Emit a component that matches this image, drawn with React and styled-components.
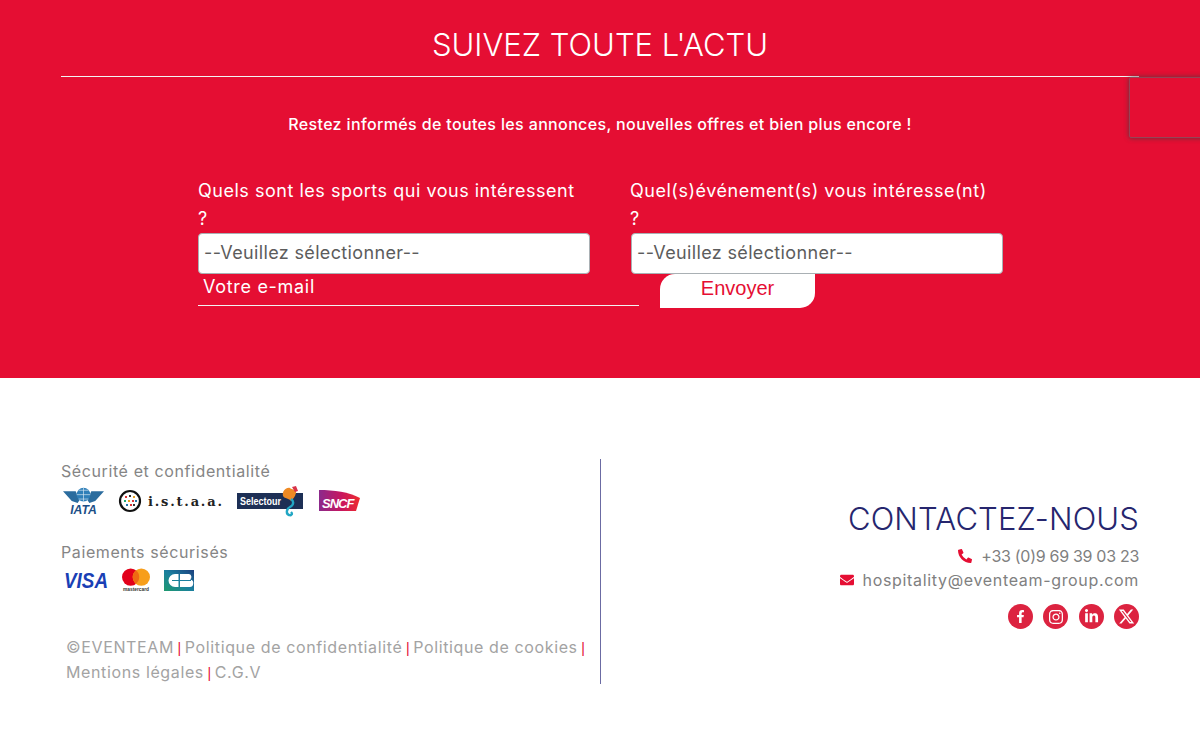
import React from 'react'
import styled, { createGlobalStyle } from 'styled-components'
import { FaPhoneAlt, FaEnvelope, FaFacebookF, FaInstagram, FaLinkedinIn } from 'react-icons/fa'
import { FaXTwitter } from 'react-icons/fa6'

const Global = createGlobalStyle`
html, body { margin: 0; padding: 0; background: #fff; }
body { font-family: Inter, "Open Sans", sans-serif; overflow: hidden; }
* { box-sizing: border-box; }
`
const Page = styled.div`
position: relative;
width: 1200px;
height: 733px;
overflow: hidden;
`
const Newsletter = styled.section`
height: 378px;
background: #e50e33;
padding: 0 61px;
color: #fff;
`
const Title = styled.h2`
margin: 0;
height: 77px;
padding-top: 26px;
border-bottom: 1px solid #f3f3f3;
text-align: center;
font-size: 31px;
line-height: 38px;
font-weight: 300;
letter-spacing: 0;
`
const Intro = styled.p`
margin: 36px 0 0;
text-align: center;
font-size: 16px;
line-height: 22px;
font-weight: 500;
letter-spacing: 0.36px;
`
const Form = styled.form`
margin: 42px 0 0 137px;
`
const Selects = styled.div`
display: flex;
`
const Field = styled.div`
width: ${p => p.$width}px;
`
const Label = styled.label`
display: block;
font-size: 18px;
line-height: 28px;
letter-spacing: 0.52px;
white-space: pre-line;
`
const Select = styled.div`
height: 41px;
margin-left: ${p => p.$nudge || 0}px;
width: ${p => p.$width}px;
padding-left: 5px;
background: #fff;
border: 1px solid #a9b0b4;
border-radius: 4px;
color: #5c5c5c;
font-size: 18px;
line-height: 37px;
letter-spacing: 0.35px;
`
const SendRow = styled.div`
display: flex;
align-items: flex-start;
`
const Email = styled.div`
width: 441px;
height: 32px;
padding-left: 5px;
border-bottom: 1px solid #f3f3f3;
font-size: 18px;
line-height: 26px;
letter-spacing: 0.7px;
`
const SendButton = styled.button`
width: 155px;
height: 34px;
margin-left: 21px;
padding: 0 0 6px;
border: 0;
border-radius: 15px 0 15px 0;
background: #fff;
color: #e50e33;
font-family: "Liberation Sans", Arial, sans-serif;
font-size: 20px;
line-height: 28px;
`
const Captcha = styled.div`
position: absolute;
left: 1129px;
top: 77px;
width: 90px;
height: 61px;
border: 1px solid #974356;
border-radius: 2px;
box-shadow: 0 0 5px rgba(60, 60, 60, 0.8);
`
const Footer = styled.footer`
display: flex;
padding: 81px 61px 0;
`
const Legal = styled.div`
width: 540px;
height: 225px;
border-right: 1px solid #6b6ba3;
color: #858585;
`
const Heading = styled.div`
font-size: 16px;
line-height: 24px;
letter-spacing: 0.6px;
`
const Logos = styled.div`
display: flex;
align-items: center;
gap: ${p => p.$gap}px;
height: 30px;
margin: ${p => p.$top}px 0 0 2px;
svg { overflow: visible; flex: none; }
`
const Section = styled.div`
margin-top: ${p => p.$top}px;
`
const Links = styled.p`
margin: 40px 0 0 5px;
color: #a3a3a3;
font-size: 16px;
line-height: 24px;
letter-spacing: 0.62px;
`
const Pipe = styled.span`
margin: 0 -1.5px;
color: #e50e33;
font-family: "Liberation Sans", Arial, sans-serif;
font-size: 14px;
letter-spacing: 0;
`
const Contact = styled.div`
flex: 1;
display: flex;
flex-direction: column;
align-items: flex-end;
padding-top: 38px;
color: #808080;
`
const ContactTitle = styled.h3`
margin: 0 0 3px;
color: #26266e;
font-size: 31px;
line-height: 44px;
font-weight: 300;
letter-spacing: 0.15px;
`
const ContactLine = styled.div`
display: flex;
align-items: center;
gap: 9px;
height: 24px;
font-size: 16px;
letter-spacing: ${p => p.$spacing}px;
svg { color: #e50e33; font-size: 14px; }
`
const Socials = styled.div`
display: flex;
gap: 10.5px;
margin-top: 12px;
`
const Social = styled.a`
display: flex;
align-items: center;
justify-content: center;
width: 25px;
height: 25px;
border-radius: 50%;
background: #dc2340;
color: #fff;
font-size: ${p => p.$size}px;
`

const IataLogo = () => (
    <svg width="41" height="28" viewBox="0 0 42 28">
        <path d="M0 4 L13 4 L17 13 L15 16 L9 14 Z M42 4 L29 4 L25 13 L27 16 L33 14 Z" fill="#2b6c9e" />
        <circle cx="21" cy="7.5" r="7" fill="#2f7fb8" />
        <path d="M14 7.5h14M21 .5v14M16 3h10M16 12h10" stroke="#d5e6f2" strokeWidth=".7" fill="none" />
        <text x="21" y="27" textAnchor="middle" fontFamily="Liberation Sans" fontWeight="700" fontStyle="italic" fontSize="12.500" fill="#1c4f86">IATA</text>
    </svg>
)

const IstaaLogo = () => (
    <svg width="103" height="24" viewBox="0 0 103 24">
        <circle cx="11" cy="12" r="10" fill="#fff" stroke="#111" strokeWidth="2.2" />
        {[[7, 8, '#d33'], [11, 7, '#333'], [15, 8, '#e8a020'], [6, 12, '#2a7'], [10, 12, '#e8a020'], [14, 12, '#d33'], [17, 12, '#27a'], [8, 16, '#27a'], [12, 16, '#d33'], [15, 16, '#333']].map(([x, y, c]) => (
            <rect key={`${x}-${y}`} x={x - 1} y={y - 1} width="2" height="2" fill={c} />
        ))}
        <text x="29" y="17" fontFamily="DejaVu Serif" fontWeight="700" fontSize="13" letterSpacing="1.8" fill="#222">i.s.t.a.a.</text>
    </svg>
)

const SelectourLogo = () => (
    <svg width="67" height="30" viewBox="0 0 67 30">
        <rect x="0" y="7" width="66" height="16" fill="#1d2f55" />
        <text x="3" y="18.500" fontFamily="Liberation Sans" fontWeight="700" fontSize="10" textLength="41" lengthAdjust="spacingAndGlyphs" fill="#fff">Selectour</text>
        <path d="M46 10 C45 5 49 1 53 2 C55 4 60 3 59 7 C58 11 56 13 54 15 C52 12 48 13 46 10 Z" fill="#ef8a24" />
        <path d="M55 1 L59 0 L61 5 L58 6 Z" fill="#d8344a" />
        <path d="M54 13 C57 15 57 19 53 21 C49 23 49 28 52 29 C54 30 56 28 54 26" fill="none" stroke="#22a7c4" strokeWidth="2.4" />
    </svg>
)

const SncfLogo = () => (
    <svg width="42" height="22" viewBox="0 0 42 22">
        <defs>
            <linearGradient id="sncf" x1="0" x2="1" y1="0" y2="0">
                <stop offset="0" stopColor="#8b2a8c" />
                <stop offset=".55" stopColor="#c8165f" />
                <stop offset="1" stopColor="#ef2b2d" />
            </linearGradient>
        </defs>
        <path d="M0 0 C15 0 30 2 41 8 L37 21 L0 21 Z" fill="url(#sncf)" />
        <text x="3" y="18" fontFamily="Liberation Sans" fontWeight="700" fontStyle="italic" fontSize="13" letterSpacing="-1" fill="#fff">SNCF</text>
    </svg>
)

const VisaLogo = () => (
    <svg width="45" height="17" viewBox="0 0 45 17">
        <text x="1" y="16" fontFamily="Liberation Sans" fontWeight="700" fontStyle="italic" fontSize="22" textLength="44" lengthAdjust="spacingAndGlyphs" fill="#1a3fb5">VISA</text>
    </svg>
)

const MastercardLogo = () => (
    <svg width="28" height="24" viewBox="0 0 29 24">
        <circle cx="9" cy="9" r="9" fill="#e2001a" />
        <circle cx="20" cy="9" r="9" fill="#f79e1b" />
        <path d="M14.500 2 a9 9 0 0 1 0 14 a9 9 0 0 1 0 -14" fill="#ef6a12" />
        <text x="14.500" y="23" textAnchor="middle" fontFamily="Liberation Sans" fontWeight="700" fontSize="5" fill="#333">mastercard</text>
    </svg>
)

const CbLogo = () => (
    <svg width="30" height="21" viewBox="0 0 30 21">
        <defs>
            <linearGradient id="cb" x1="0" x2="1" y1="1" y2="0">
                <stop offset="0" stopColor="#1f9a6e" />
                <stop offset=".5" stopColor="#1b7f9f" />
                <stop offset="1" stopColor="#1c3f7e" />
            </linearGradient>
        </defs>
        <rect width="30" height="21" fill="url(#cb)" />
        <path d="M14.500 4 H11 a6.500 6.500 0 0 0 0 13 H14.500 V11 H8 V10 H14.500 Z" fill="#fff" />
        <path d="M16 4 H25 a3 3 0 0 1 1 5.500 a3.200 3.200 0 0 1 -1 7.500 H16 Z" fill="#fff" />
        <path d="M16 10.500 H27" stroke="#1b7f9f" strokeWidth="1" />
    </svg>
)

export default function App() {
    return (
        <Page>
            <Global />
            <Newsletter>
                <Title>SUIVEZ TOUTE L'ACTU</Title>
                <Intro>Restez informés de toutes les annonces, nouvelles offres et bien plus encore !</Intro>
                <Form>
                    <Selects>
                        <Field $width={432}>
                            <Label>{'Quels sont les sports qui vous intéressent\n?'}</Label>
                            <Select $width={392}>--Veuillez sélectionner--</Select>
                        </Field>
                        <Field $width={400}>
                            <Label>{'Quel(s)événement(s) vous intéresse(nt)\n?'}</Label>
                            <Select $width={372} $nudge={1}>--Veuillez sélectionner--</Select>
                        </Field>
                    </Selects>
                    <SendRow>
                        <Email>Votre e-mail</Email>
                        <SendButton type="button">Envoyer</SendButton>
                    </SendRow>
                </Form>
            </Newsletter>
            <Captcha />
            <Footer>
                <Legal>
                    <Heading>Sécurité et confidentialité</Heading>
                    <Logos $gap={15} $top={3}>
                        <IataLogo />
                        <IstaaLogo />
                        <SelectourLogo />
                        <SncfLogo />
                    </Logos>
                    <Section $top={24}>
                        <Heading>Paiements sécurisés</Heading>
                    </Section>
                    <Logos $gap={14} $top={1}>
                        <VisaLogo />
                        <MastercardLogo />
                        <CbLogo />
                    </Logos>
                    <Links>
                        ©EVENTEAM <Pipe>|</Pipe> Politique de confidentialité <Pipe>|</Pipe> Politique de cookies <Pipe>|</Pipe><br />
                        Mentions légales <Pipe>|</Pipe> C.G.V
                    </Links>
                </Legal>
                <Contact>
                    <ContactTitle>CONTACTEZ-NOUS</ContactTitle>
                    <ContactLine $spacing={-0.3}><FaPhoneAlt />+33 (0)9 69 39 03 23</ContactLine>
                    <ContactLine $spacing={0.67}><FaEnvelope />hospitality@eventeam-group.com</ContactLine>
                    <Socials>
                        <Social $size={13}><FaFacebookF /></Social>
                        <Social $size={16}><FaInstagram /></Social>
                        <Social $size={15}><FaLinkedinIn /></Social>
                        <Social $size={17}><FaXTwitter /></Social>
                    </Socials>
                </Contact>
            </Footer>
        </Page>
    )
}
